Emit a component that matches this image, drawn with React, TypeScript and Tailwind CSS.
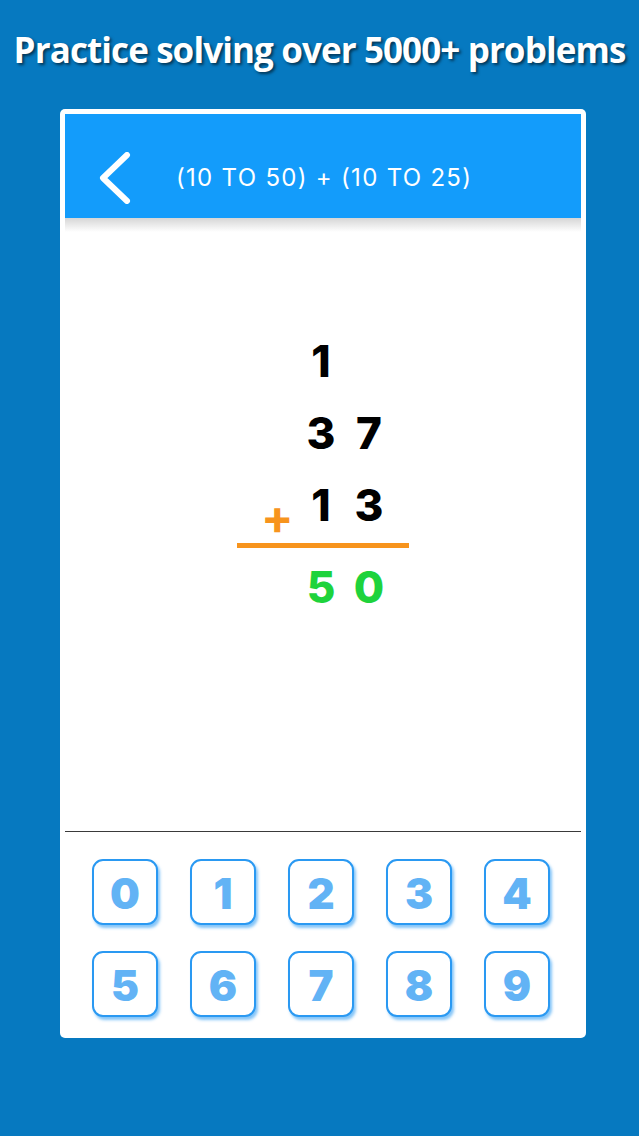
import React from "react";

const keys1 = ["0", "1", "2", "3", "4"];
const keys2 = ["5", "6", "7", "8", "9"];

function Key({ d }: { d: string }) {
  return (
    <div className="w-[66px] h-[66px] rounded-[11px] border-[2.5px] border-[#2a99f2] bg-white shadow-[2px_3px_3px_rgba(33,150,243,0.55)] flex items-center justify-center">
      <span className="mt-[3px] text-[42px] leading-none font-black text-[#62b3f5] [font-family:Inter,'Noto_Sans',sans-serif]">
        {d}
      </span>
    </div>
  );
}

export default function App() {
  return (
    <div className="w-[639px] h-[1136px] bg-[#0679c0] flex flex-col overflow-hidden">
      <h1 className="mt-[25px] h-[50px] flex items-center justify-center text-white font-bold text-[35px] tracking-[-0.9px] [font-family:'Open_Sans',sans-serif] [text-shadow:2px_2px_3px_rgba(0,0,0,0.55)] whitespace-nowrap">
        Practice solving over 5000+ problems
      </h1>
      <div className="mt-[34px] ml-[60px] w-[526px] h-[929px] bg-white rounded-[5px] p-[5px] flex flex-col">
        <div className="h-[104px] pt-[24px] bg-[#139cfb] flex items-center shrink-0">
          <svg className="ml-[33px] w-[34px] h-[52px]" viewBox="0 0 34 52" fill="none">
            <path d="M29 3 L5 26 L29 49" stroke="white" strokeWidth="6" strokeLinecap="round" strokeLinejoin="round" />
          </svg>
          <span className="ml-[44px] text-white text-[24px] [font-family:Inter,'Noto_Sans',sans-serif] tracking-[1.3px]">
            (10 TO 50) + (10 TO 25)
          </span>
        </div>
        <div className="h-[14px] bg-gradient-to-b from-[#d6d6d6] to-white shrink-0" />
        <div className="h-[599px] flex flex-col items-center pt-[93px] shrink-0 [font-family:Inter,'Noto_Sans',sans-serif]">
          <div className="w-[172px] grid grid-cols-[60px_48px_48px_16px] text-[44px] font-extrabold text-black leading-[72px]">
            <div />
            <div className="text-center">1</div>
            <div />
            <div />
            <div />
            <div className="text-center">3</div>
            <div className="text-center">7</div>
            <div />
            <div className="relative">
              <span className="absolute left-[24px] top-[12px] text-[#f7941d] text-[48px] font-bold leading-[72px]">+</span>
            </div>
            <div className="text-center">1</div>
            <div className="text-center">3</div>
            <div />
          </div>
          <div className="w-[172px] h-[5px] mt-[2px] bg-[#f7941d]" />
          <div className="w-[172px] mt-[3px] grid grid-cols-[60px_48px_48px_16px] text-[44px] font-extrabold text-[#1ed33c] leading-[72px]">
            <div />
            <div className="text-center">5</div>
            <div className="text-center">0</div>
            <div />
          </div>
        </div>
        <div className="h-px bg-[#3a3a3a] shrink-0" />
        <div className="flex-1 pt-[27px] pl-[27px] flex flex-col gap-[26px]">
          <div className="flex gap-[32px]">
            {keys1.map((k) => (
              <Key key={k} d={k} />
            ))}
          </div>
          <div className="flex gap-[32px]">
            {keys2.map((k) => (
              <Key key={k} d={k} />
            ))}
          </div>
        </div>
      </div>
    </div>
  );
}
